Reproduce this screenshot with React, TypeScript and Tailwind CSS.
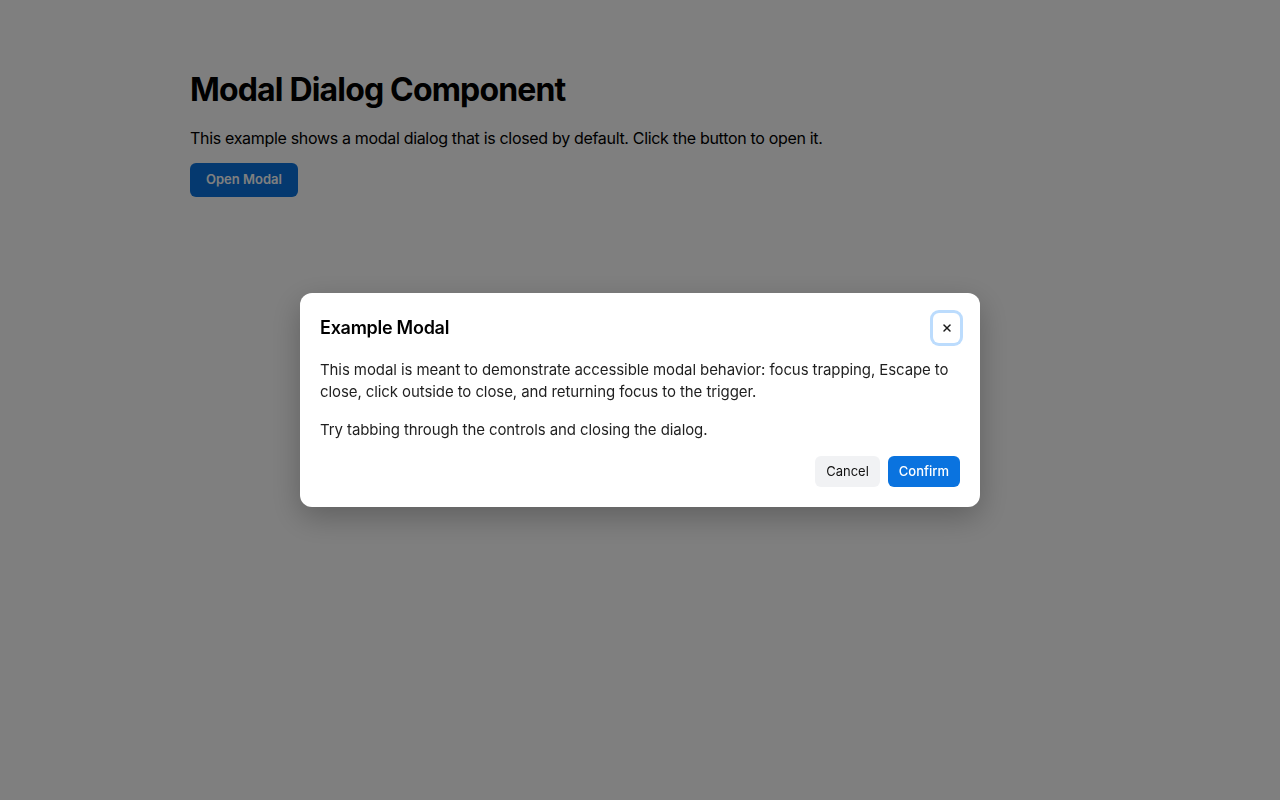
import { X } from "lucide-react";

export default function App() {
  return (
    <div
      className="relative min-h-[800px] bg-white text-black"
      style={{ fontFamily: "Inter, 'Noto Sans', sans-serif" }}
    >
      <main className="mx-auto max-w-[900px] pt-[70px]">
        <h1 className="text-[32px] font-bold leading-[40px] tracking-[-0.026em]">
          Modal Dialog Component
        </h1>
        <p className="mt-[16px] text-[16px] leading-[24px] tracking-[-0.02em]">
          This example shows a modal dialog that is closed by default. Click the button to open it.
        </p>
        <button
          className="mt-[13px] h-[34px] rounded-[6px] bg-[#0a73df] px-4 text-[13px] font-semibold text-white"
          type="button"
        >
          Open Modal
        </button>
      </main>

      <div className="fixed inset-0 flex items-center justify-center bg-black/50">
        <div
          aria-labelledby="modal-title"
          aria-modal="true"
          className="w-[680px] rounded-[12px] bg-white p-5 shadow-[0_10px_30px_rgba(0,0,0,0.25)]"
          role="dialog"
        >
          <div className="flex items-center justify-between">
            <h2
              className="text-[18px] font-semibold leading-[28px] tracking-[-0.015em]"
              id="modal-title"
            >
              Example Modal
            </h2>
            <button
              aria-label="Close"
              className="flex h-[30px] w-[27px] items-center justify-center rounded-[6px] bg-white text-[#1a1a1a] ring-[3px] ring-[#bcdcfd]"
              type="button"
            >
              <X className="size-3" strokeWidth={3} />
            </button>
          </div>
          <p className="mt-[16px] text-[15px] leading-[22px] tracking-[-0.006em] text-[#1f1f1f]">
            This modal is meant to demonstrate accessible modal behavior: focus trapping, Escape to
            close, click outside to close, and returning focus to the trigger.
          </p>
          <p className="mt-[16px] text-[15px] leading-[22px] tracking-[-0.006em] text-[#1f1f1f]">
            Try tabbing through the controls and closing the dialog.
          </p>
          <div className="mt-[15px] flex justify-end gap-2">
            <button
              className="h-[31px] rounded-[6px] bg-[#f1f2f4] px-[11px] text-[13px] text-[#111]"
              type="button"
            >
              Cancel
            </button>
            <button
              className="h-[31px] rounded-[6px] bg-[#0a73df] px-[11px] text-[13px] font-medium text-white"
              type="button"
            >
              Confirm
            </button>
          </div>
        </div>
      </div>
    </div>
  );
}
